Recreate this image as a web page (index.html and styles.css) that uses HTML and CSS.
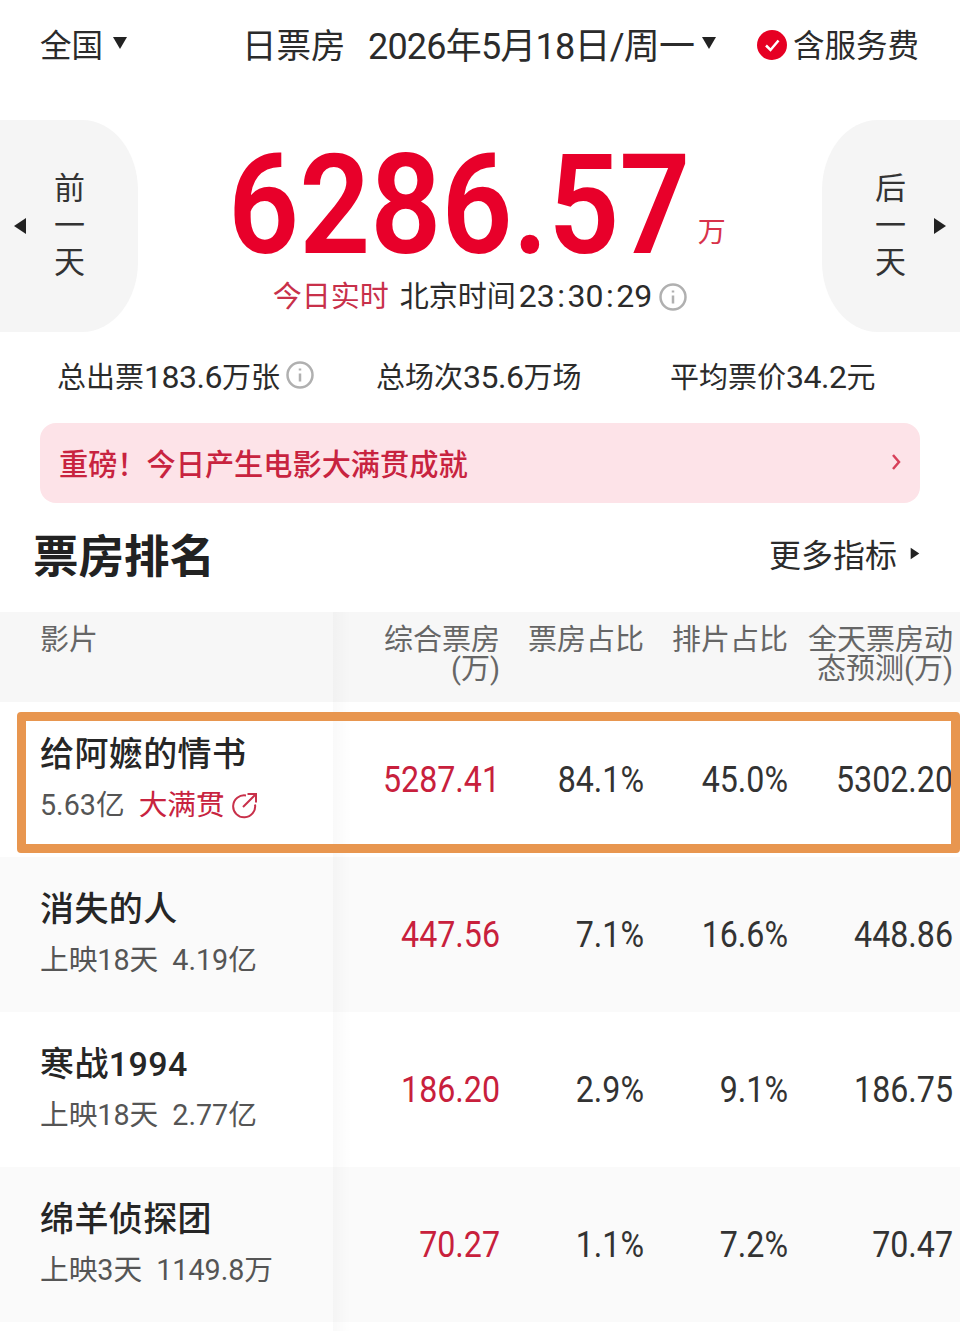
FILE: index.html
```html
<html>
  <head>
    <title>日票房</title>
    <link rel="stylesheet" href="styles.css">
  </head>
  <body>
    <div class="topbar">
      <div class="region">全国<svg class="caret-down" viewBox="0 0 16 14"><path d="M1 1h14L8 13z"/></svg></div>
      <div class="date-picker">
        <span class="board-name">日票房</span>
        <span class="date">2026年5月18日/周一</span><svg class="caret-down" viewBox="0 0 16 14"><path d="M1 1h14L8 13z"/></svg>
      </div>
      <div class="fee-toggle">
        <svg class="fee-check" viewBox="0 0 30 30"><circle cx="15" cy="15" r="15"/><path d="M9 15.500l4.500 4.500 8-9.500"/></svg>
        含服务费
      </div>
    </div>

    <div class="hero">
      <div class="day-btn day-prev">
        <svg class="caret-side" viewBox="0 0 14 18"><path d="M13 1v16L1 9z"/></svg>
        <div class="day-label"><span>前</span><span>一</span><span>天</span></div>
      </div>
      <div class="total">
        <div class="total-figure"><span class="total-num">6286.57</span><span class="total-unit">万</span></div>
        <div class="total-time">
          <span class="live">今日实时</span>
          <span>北京时间<span class="clock">23<span class="colon">:</span>30<span class="colon">:</span>29</span></span>
          <svg class="info" viewBox="0 0 28 28"><circle cx="14" cy="14" r="12.500"/><path d="M14 12.500v8M14 7.500v2"/></svg>
        </div>
      </div>
      <div class="day-btn day-next">
        <div class="day-label"><span>后</span><span>一</span><span>天</span></div>
        <svg class="caret-side" viewBox="0 0 14 18"><path d="M1 1v16l12-8z"/></svg>
      </div>
    </div>

    <div class="stats">
      <div class="stat stat-tickets"><span>总出票<span class="digits">183.6</span>万张</span><svg class="info" viewBox="0 0 28 28"><circle cx="14" cy="14" r="12.500"/><path d="M14 12.500v8M14 7.500v2"/></svg></div>
      <div class="stat stat-shows"><span>总场次<span class="digits">35.6</span>万场</span></div>
      <div class="stat stat-price"><span>平均票价<span class="digits">34.2</span>元</span></div>
    </div>

    <div class="banner">
      <span>重磅！今日产生电影大满贯成就</span>
      <svg class="banner-arrow" viewBox="0 0 10 18"><path d="M2 2l6 7-6 7"/></svg>
    </div>

    <div class="section-head">
      <h2>票房排名</h2>
      <div class="more">更多指标<svg class="caret-side small" viewBox="0 0 14 18"><path d="M1 1v16l12-8z"/></svg></div>
    </div>

    <div class="rank-table">
      <div class="row head">
        <div class="col-film">影片</div>
        <div class="col">综合票房<br>(万)</div>
        <div class="col">票房占比</div>
        <div class="col">排片占比</div>
        <div class="col">全天票房动<br>态预测(万)</div>
      </div>

      <div class="row">
        <div class="col-film">
          <div class="film-name">给阿嬷的情书</div>
          <div class="film-sub">5.63亿<span class="slam">大满贯</span><svg class="slam-link" viewBox="0 0 28 28"><path d="M15 4.500a11 11 0 1 0 9 9"/><path d="M12 16L25 3M16.500 3H25v8.500"/></svg></div>
        </div>
        <div class="col money">5287.41</div>
        <div class="col">84.1%</div>
        <div class="col">45.0%</div>
        <div class="col">5302.20</div>
      </div>

      <div class="row alt">
        <div class="col-film">
          <div class="film-name">消失的人</div>
          <div class="film-sub">上映18天<span class="gross">4.19亿</span></div>
        </div>
        <div class="col money">447.56</div>
        <div class="col">7.1%</div>
        <div class="col">16.6%</div>
        <div class="col">448.86</div>
      </div>

      <div class="row">
        <div class="col-film">
          <div class="film-name">寒战1994</div>
          <div class="film-sub">上映18天<span class="gross">2.77亿</span></div>
        </div>
        <div class="col money">186.20</div>
        <div class="col">2.9%</div>
        <div class="col">9.1%</div>
        <div class="col">186.75</div>
      </div>

      <div class="row alt">
        <div class="col-film">
          <div class="film-name">绵羊侦探团</div>
          <div class="film-sub">上映3天<span class="gross">1149.8万</span></div>
        </div>
        <div class="col money">70.27</div>
        <div class="col">1.1%</div>
        <div class="col">7.2%</div>
        <div class="col">70.47</div>
      </div>

      <!-- frame around the top film -->
      <div class="top-frame"></div>
    </div>
  </body>
</html>
```

FILE: styles.css
```css
body {
  margin: 0;
  background: #fff;
  color: #2b2b2b;
  font-family: Roboto, "Noto Sans CJK SC", sans-serif;
  overflow: hidden;
}
.topbar {
  display: flex;
  align-items: center;
  box-sizing: border-box;
  height: 92px;
  padding: 0 41px 6px 40px;
  font-size: 31.500px;
}
.region {
  display: flex;
  align-items: center;
  gap: 9px;
  width: 205px;
}
.caret-down {
  width: 16px;
  height: 14px;
  fill: #222;
}
.date-picker {
  display: flex;
  align-items: center;
  flex: 1;
}
.board-name {
  width: 126px;
  margin-left: -3px;
  font-size: 34.500px;
}
.date {
  font-size: 36px;
  letter-spacing: -.8px;
  margin-right: 7px;
}
.fee-toggle {
  display: flex;
  align-items: center;
  gap: 6px;
}
.fee-check {
  width: 30px;
  height: 30px;
  margin-top: 4px;
}
.fee-check circle {
  fill: #e60023;
}
.fee-check path {
  fill: none;
  stroke: #fff;
  stroke-width: 2.500;
}

.hero {
  display: flex;
  justify-content: space-between;
  height: 212px;
  margin-top: 28px;
}
.day-btn {
  display: flex;
  align-items: center;
  gap: 27px;
  width: 138px;
  background: #f5f5f5;
  box-sizing: border-box;
}
.day-prev {
  border-radius: 0 56px 56px 0 / 0 70px 70px 0;
  padding-left: 13px;
}
.day-next {
  border-radius: 56px 0 0 56px / 70px 0 0 70px;
  justify-content: flex-end;
  padding-right: 13px;
}
.caret-side {
  width: 14px;
  height: 18px;
  fill: #222;
}
.day-label {
  display: flex;
  flex-direction: column;
  align-items: center;
  gap: 6px;
  font-size: 31px;
  line-height: 31px;
  margin-top: -2px;
  color: #333;
}
.total {
  display: flex;
  flex-direction: column;
  align-items: center;
  padding-top: 12px;
}
.total-figure {
  display: flex;
  align-items: flex-end;
  height: 146px;
  margin-left: -6px;
}
/* digits in this app are narrower than Roboto */
.total-num {
  font-size: 140px;
  line-height: 146px;
  font-weight: 600;
  color: #e8002a;
  transform: scaleX(.89);
  transform-origin: left;
  margin-right: -56px;
}
.total-unit {
  font-size: 28px;
  line-height: 28px;
  color: #d8324a;
  margin: 0 0 31px 6px;
}
.total-time {
  display: flex;
  align-items: center;
  font-size: 29px;
  line-height: 44px;
  gap: 11px;
  margin-top: -4px;
}
.live {
  color: #c8304a;
}
.clock {
  font-size: 32px;
  margin-left: 3px;
}
.colon {
  margin: 0 2.500px;
}
.info {
  width: 28px;
  height: 28px;
  margin-left: -4px;
  fill: none;
  stroke: #b0b0b0;
  stroke-width: 2.500;
}

.stats {
  display: flex;
  align-items: center;
  box-sizing: border-box;
  height: 91px;
  padding-bottom: 6px;
  font-size: 29px;
}
.digits {
  font-size: 32px;
  letter-spacing: -.5px;
}
.stat {
  display: flex;
  align-items: center;
  gap: 6px;
}
.stat .info {
  margin-left: 0;
}
.stat-tickets {
  margin-left: 57px;
  width: 319px;
}
.stat-shows {
  width: 294px;
}

.banner {
  display: flex;
  align-items: center;
  justify-content: space-between;
  box-sizing: border-box;
  height: 80px;
  margin: 0 40px;
  padding: 0 19px 2px;
  background: #fde3e8;
  border-radius: 16px;
  color: #c8233f;
  font-size: 29.200px;
  font-weight: 500;
}
.banner-arrow {
  width: 10px;
  height: 18px;
  fill: none;
  stroke: #d8405a;
  stroke-width: 2.500;
}

.section-head {
  display: flex;
  align-items: center;
  justify-content: space-between;
  box-sizing: border-box;
  height: 109px;
  padding: 0 40px 10px 33px;
}
h2 {
  margin: 0;
  font-size: 45.500px;
  font-weight: 700;
  color: #222;
}
.more {
  display: flex;
  align-items: center;
  gap: 13px;
  font-size: 32px;
}
.caret-side.small {
  width: 10px;
  height: 13px;
  margin-top: 2px;
}

.rank-table {
  position: relative;
}
/* soft edge of the pinned film column, runs on to the foot of the page */
.rank-table::after {
  content: '';
  position: absolute;
  top: 0;
  bottom: -9px;
  left: 333px;
  width: 18px;
  background: linear-gradient(to right, rgba(0, 0, 0, .025), rgba(0, 0, 0, 0));
}
.row {
  display: grid;
  grid-template-columns: 333px 167px 144px 144px 165px;
  align-items: center;
  height: 155px;
  font-size: 37px;
  color: #333;
}
.row.alt {
  background: #fafafa;
}
.row.head {
  align-items: start;
  height: 90px;
  padding-top: 14px;
  box-sizing: border-box;
  background: #f7f7f7;
  font-size: 29px;
  line-height: 29px;
  color: #666;
}
.col {
  text-align: right;
  white-space: nowrap;
  transform: scaleX(.87);
  transform-origin: right;
}
.head .col {
  transform: none;
}
.col-film {
  align-self: stretch;
  padding-left: 40px;
}
.film-name {
  margin-top: 29px;
  font-size: 34px;
  line-height: 46px;
  font-weight: 500;
  letter-spacing: .4px;
  color: #262626;
}
.film-sub {
  display: flex;
  align-items: center;
  margin-top: 8px;
  font-size: 28.700px;
  line-height: 40px;
  color: #555;
}
.gross {
  margin-left: 14px;
}
.slam {
  margin-left: 14px;
  color: #c8233f;
}
.slam-link {
  width: 28px;
  height: 28px;
  margin-left: 6px;
  fill: none;
  stroke: #c8304a;
  stroke-width: 2;
}
.money {
  color: #c8203c;
}
.top-frame {
  position: absolute;
  z-index: 1;
  top: 100px;
  left: 17px;
  right: 0;
  height: 141px;
  box-sizing: border-box;
  border: 9px solid #e8964f;
  border-radius: 4px;
}
```
